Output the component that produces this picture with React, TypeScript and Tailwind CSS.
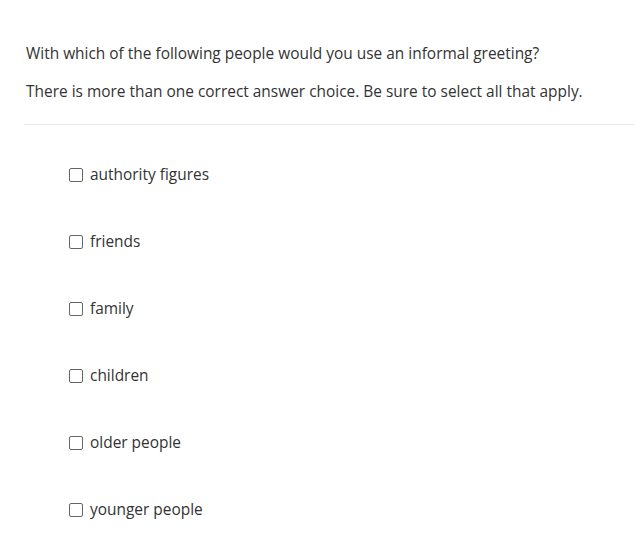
import React from "react";

const options = [
  "authority figures",
  "friends",
  "family",
  "children",
  "older people",
  "younger people",
];

export default function App() {
  return (
    <div
      className="w-[634px] h-[541px] bg-white text-[#333333] overflow-hidden"
      style={{ fontFamily: '"Open Sans", sans-serif' }}
    >
      <div className="pl-[26px] pt-[42px]">
        <p className="text-[15.45px] leading-[22px]">
          With which of the following people would you use an informal greeting?
        </p>
        <p className="text-[15.45px] leading-[22px] mt-[16px]">
          There is more than one correct answer choice. Be sure to select all that apply.
        </p>
      </div>
      <div className="ml-[24px] mt-[22px] h-px bg-[#e8e8e8]" />
      <div className="pl-[68px] pt-[39px] flex flex-col gap-[45px]">
        {options.map((o) => (
          <label key={o} className="flex items-center h-[22px] text-[15.45px]">
            <span className="w-[14px] h-[14px] border border-[#666] rounded-[2px] bg-white mr-[7px] ml-px" />
            <span>{o}</span>
          </label>
        ))}
      </div>
    </div>
  );
}
